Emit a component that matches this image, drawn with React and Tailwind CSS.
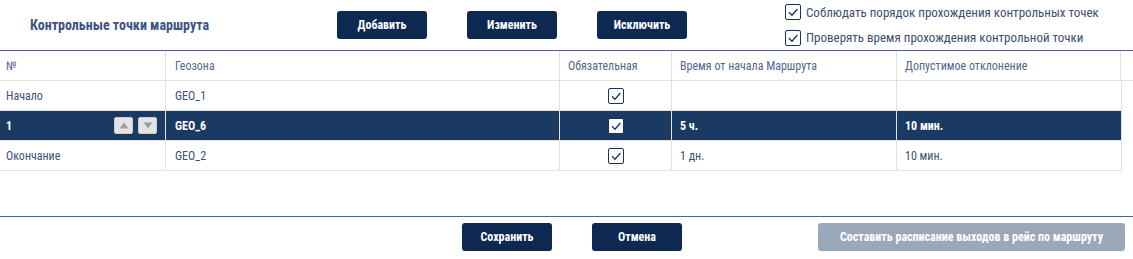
import React from "react";

const font = { fontFamily: '"Roboto Condensed", "Liberation Sans Narrow", "DejaVu Sans Condensed", Roboto, sans-serif' };

const Check = ({ className = "" }) => (
  <span
    className={`inline-flex h-[16px] w-[16px] items-center justify-center rounded-[2px] border-[1.5px] border-[#1c3358] bg-white ${className}`}
  >
    <svg width="12" height="12" viewBox="0 0 12 12" fill="none">
      <path d="M2 6.2 L5 9.2 L10.4 3" stroke="#1c3358" strokeWidth="1.3" />
    </svg>
  </span>
);

const Arrow = ({ up }) => (
  <span className="flex h-[17px] w-[19px] items-center justify-center rounded-[2px] border border-[#c9ccd1] bg-[#e3e4e6]">
    <svg width="10" height="7" viewBox="0 0 10 7">
      {up ? (
        <polygon points="5,0.5 9.5,6.5 0.5,6.5" fill="#9a9da2" />
      ) : (
        <polygon points="0.5,0.5 9.5,0.5 5,6.5" fill="#9a9da2" />
      )}
    </svg>
  </span>
);

const Btn = ({ children, className = "" }) => (
  <button
    className={`flex h-[28px] items-center justify-center rounded-[3px] bg-[#0d2851] text-[12px] font-bold text-white ${className}`}
  >
    {children}
  </button>
);

const rows = [
  { n: "Начало", geo: "GEO_1", time: "", dev: "" },
  { n: "1", geo: "GEO_6", time: "5 ч.", dev: "10 мин.", sel: true },
  { n: "Окончание", geo: "GEO_2", time: "1 дн.", dev: "10 мин." },
];

const cols = "grid grid-cols-[166px_394px_112px_225px_224px]";

export default function App() {
  return (
    <div className="h-[259px] w-[1133px] overflow-hidden bg-white" style={font}>
      {/* Header */}
      <div className="flex h-[50px] items-center">
        <div className="w-[337px] pl-[30px] text-[14px] font-bold text-[#3d5283]">
          Контрольные точки маршрута
        </div>
        <div className="flex gap-[40px] pb-[1px]">
          <Btn className="w-[90px]">Добавить</Btn>
          <Btn className="w-[90px]">Изменить</Btn>
          <Btn className="w-[90px]">Исключить</Btn>
        </div>
        <div className="ml-[98px] flex flex-col gap-[6px] text-[13px] text-[#3e4e6e]">
          <label className="flex items-center gap-[5px]">
            <Check />
            Соблюдать порядок прохождения контрольных точек
          </label>
          <label className="flex items-center gap-[5px]">
            <Check />
            Проверять время прохождения контрольной точки
          </label>
        </div>
      </div>

      {/* Table */}
      <div className="border-t-[1.5px] border-[#4a6490]">
        <div className="flex border-b border-[#e2e2e2]">
          <div className={`${cols} h-[29px] items-center text-[12px] text-[#56658a]`}>
            <div className="flex h-full items-center border-r border-[#e2e2e2] pl-[6px]">№</div>
            <div className="flex h-full items-center border-r border-[#e2e2e2] pl-[9px]">Геозона</div>
            <div className="flex h-full items-center border-r border-[#e2e2e2] pl-[8px]">Обязательная</div>
            <div className="flex h-full items-center border-r border-[#e2e2e2] pl-[8px]">Время от начала Маршрута</div>
            <div className="flex h-full items-center border-r border-[#e2e2e2] pl-[8px]">Допустимое отклонение</div>
          </div>
        </div>
        <div className="w-[1122px] border-r border-[#e2e2e2]">
          {rows.map((r) => (
            <div
              key={r.n}
              className={`${cols} h-[30px] items-center border-b border-[#e2e2e2] text-[12px] ${
                r.sel ? "bg-[#1b3a63] font-bold text-white" : "text-[#3d5078]"
              }`}
            >
              <div className="flex h-full items-center justify-between border-r border-[#e2e2e2] pl-[6px] pr-[8px]">
                <span>{r.n}</span>
                {r.sel && (
                  <span className="flex gap-[5px]">
                    <Arrow up />
                    <Arrow />
                  </span>
                )}
              </div>
              <div className="flex h-full items-center border-r border-[#e2e2e2] pl-[9px]">{r.geo}</div>
              <div className="flex h-full items-center justify-center border-r border-[#e2e2e2]">
                <Check />
              </div>
              <div className="flex h-full items-center border-r border-[#e2e2e2] pl-[8px]">{r.time}</div>
              <div className="flex h-full items-center pl-[8px]">{r.dev}</div>
            </div>
          ))}
        </div>
      </div>

      {/* Footer */}
      <div className="mt-[45px] border-t-[1.5px] border-[#4a6490]">
        <div className="flex items-center pt-[6px]">
          <Btn className="ml-[462px] w-[90px]">Сохранить</Btn>
          <Btn className="ml-[40px] w-[90px]">Отмена</Btn>
          <Btn className="ml-[136px] w-[307px] !bg-[#9ba8ba]">
            Составить расписание выходов в рейс по маршруту
          </Btn>
        </div>
      </div>
    </div>
  );
}
